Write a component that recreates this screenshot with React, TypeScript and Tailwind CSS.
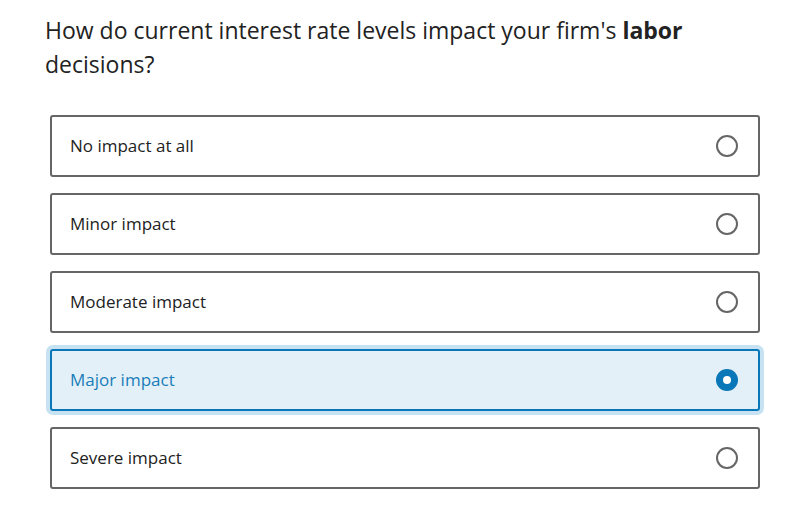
import React from 'react';

const options = [
  'No impact at all',
  'Minor impact',
  'Moderate impact',
  'Major impact',
  'Severe impact',
];

const Radio: React.FC<{ checked: boolean }> = ({ checked }) =>
  checked ? (
    <span className="flex h-[22px] w-[22px] items-center justify-center rounded-full bg-[#0a77b8]">
      <span className="h-[8px] w-[8px] rounded-full bg-white" />
    </span>
  ) : (
    <span className="h-[22px] w-[22px] rounded-full border-2 border-[#666666] bg-white" />
  );

export default function App() {
  const selected = 3;
  return (
    <div className="h-[520px] w-[804px] bg-white font-['Open_Sans',sans-serif] text-[#222222]">
      <h1 className="pl-[45px] pr-[60px] pt-[13px] text-[23px] leading-[34px] font-normal">
        How do current interest rate levels impact your firm's <b className="font-bold">labor</b> decisions?
      </h1>
      <div className="mt-[34px] flex w-[710px] ml-[50px] flex-col gap-[16px]">
        {options.map((label, i) => {
          const on = i === selected;
          return (
            <div
              key={label}
              className={
                on
                  ? 'flex h-[62px] items-center justify-between rounded-[3px] border-2 border-[#0a77b8] bg-[#e4f0f8] pl-[18px] pr-[20px] shadow-[0_0_0_4px_#c6e2f3]'
                  : 'flex h-[62px] items-center justify-between rounded-[3px] border-2 border-[#666666] bg-white pl-[18px] pr-[20px]'
              }
            >
              <span className={on ? 'text-[17px] text-[#1a7db8]' : 'text-[17px] text-[#222222]'}>{label}</span>
              <Radio checked={on} />
            </div>
          );
        })}
      </div>
    </div>
  );
}
